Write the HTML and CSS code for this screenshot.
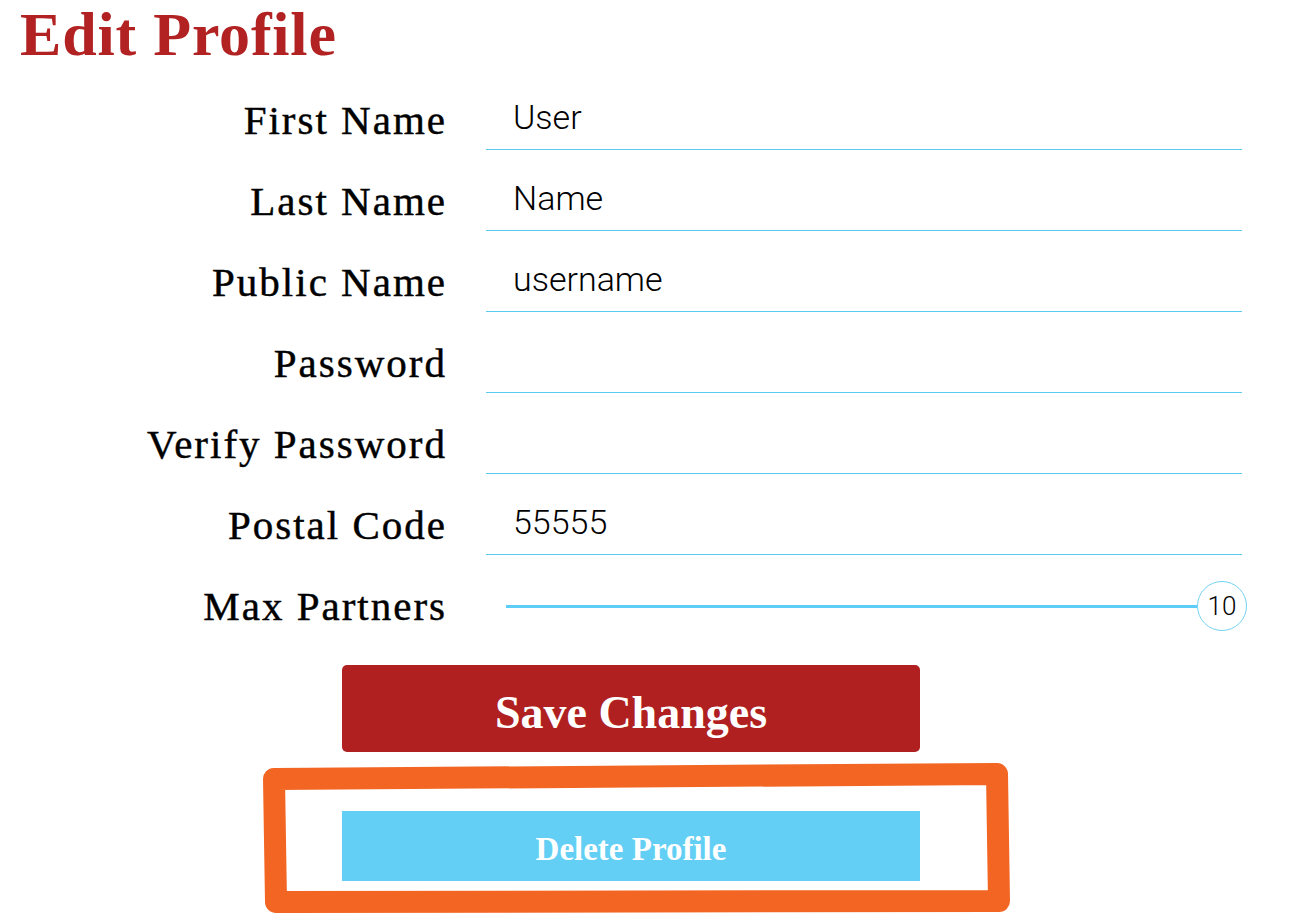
FILE: index.html
```html
<!DOCTYPE html>
<html lang="en">
<head>
<meta charset="utf-8">
<title>Edit Profile</title>
<link rel="stylesheet" href="styles.css">
</head>
<body>
<main class="page">
  <h1 class="title">Edit Profile</h1>
  <form class="form">
    <label class="label" for="first">First Name</label>
    <input class="field" id="first" type="text" value="User">
    <label class="label" for="last">Last Name</label>
    <input class="field" id="last" type="text" value="Name">
    <label class="label" for="public">Public Name</label>
    <input class="field" id="public" type="text" value="username">
    <label class="label" for="pw">Password</label>
    <input class="field" id="pw" type="password" value="">
    <label class="label" for="pw2">Verify Password</label>
    <input class="field" id="pw2" type="password" value="">
    <label class="label" for="postal">Postal Code</label>
    <input class="field" id="postal" type="text" value="55555">
    <span class="label">Max Partners</span>
    <div class="slider">
      <div class="track"></div>
      <div class="thumb">10</div>
    </div>
  </form>
  <div class="actions">
    <button class="btn btn-save" type="button">Save Changes</button>
    <button class="btn btn-delete" type="button">Delete Profile</button>
  </div>
  <svg class="annotation" width="1304" height="922" viewBox="0 0 1304 922" aria-hidden="true">
    <path d="M274 779 L997 774 L999 901 L276 902 Z" fill="none" stroke="#f26522" stroke-width="22" stroke-linejoin="round"/>
  </svg>
</main>
</body>
</html>
```

FILE: styles.css
```css
html, body {
  margin: 0;
  padding: 0;
  background: #ffffff;
}

.page {
  position: relative;
  width: 1304px;
  height: 922px;
  overflow: hidden;
}

.title {
  margin: 0 0 1px 20px;
  font-family: "Liberation Serif", "Times New Roman", serif;
  font-weight: 700;
  font-size: 62px;
  line-height: 68px;
  letter-spacing: 0.8px;
  color: #b22222;
}

.form {
  display: grid;
  grid-template-columns: 447px 756px;
  grid-auto-rows: 81px;
  column-gap: 39px;
}

.label {
  box-sizing: border-box;
  padding-top: 27px;
  text-align: right;
  font-family: "Liberation Serif", "Times New Roman", serif;
  font-size: 41px;
  line-height: 48px;
  letter-spacing: 2px;
  color: #000;
  -webkit-text-stroke: 0.45px #000;
  white-space: nowrap;
}

.field {
  box-sizing: border-box;
  width: 756px;
  height: 81px;
  margin: 0;
  padding: 16px 0 0 27px;
  border: none;
  border-bottom: 1px solid #5ccbf0;
  outline: none;
  background: transparent;
  font-family: Roboto, "Liberation Sans", sans-serif;
  font-weight: 300;
  font-size: 34px;
  color: #000;
}

.slider {
  box-sizing: border-box;
  height: 81px;
  padding: 21px 0 0 20px;
  margin-right: -5px;
  display: flex;
  align-items: center;
}

.track {
  flex: 1;
  height: 3px;
  background: #5bcdf6;
}

.thumb {
  box-sizing: border-box;
  width: 50px;
  height: 50px;
  border: 1px solid #74d2f3;
  border-radius: 50%;
  background: #fff;
  display: flex;
  align-items: center;
  justify-content: center;
  font-family: Roboto, "Liberation Sans", sans-serif;
  font-weight: 300;
  font-size: 26px;
  color: #000;
}

.actions {
  display: flex;
  flex-direction: column;
  margin: 29px 0 0 342px;
  width: 578px;
}

.btn {
  border: none;
  margin: 0;
  color: #fff;
  font-family: "Liberation Serif", "Times New Roman", serif;
  font-weight: 700;
  cursor: pointer;
}

.btn-save {
  height: 87px;
  padding: 8px 0 0;
  border-radius: 5px;
  background: #b02020;
  font-size: 46px;
}

.btn-delete {
  height: 70px;
  margin-top: 59px;
  padding: 6px 0 0;
  background: #63cff5;
  font-size: 33px;
}

.annotation {
  position: absolute;
  left: 0;
  top: 0;
  pointer-events: none;
}
```
